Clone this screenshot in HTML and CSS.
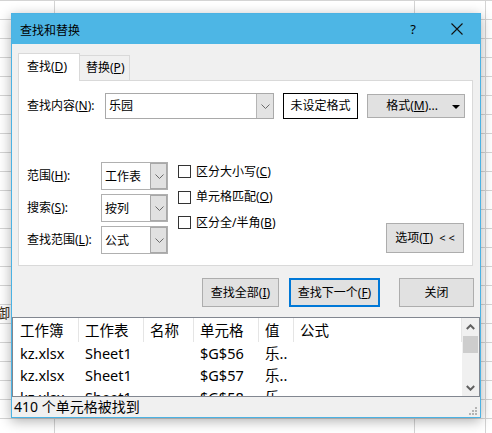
FILE: index.html
```html
<!DOCTYPE html>
<html lang="zh-CN">
<head>
<meta charset="utf-8">
<title>查找和替换</title>
<link rel="stylesheet" href="styles.css">
</head>
<body>
<div class="sheet">
  <span class="cell-text">御</span>
  <div class="dialog">
    <div class="titlebar">
      <span class="title">查找和替换</span>
      <span class="help">?</span>
      <span class="close"><svg width="12" height="12" viewBox="0 0 12 12"><path d="M0.5 0.5L11.5 11.5M11.5 0.5L0.5 11.5" stroke="#111" stroke-width="1.1" fill="none"/></svg></span>
    </div>
    <div class="dbody">
      <div class="tabs">
        <div class="tab active">查找(<u>D</u>)</div>
        <div class="tab">替换(<u>P</u>)</div>
      </div>
      <div class="panel">
        <div class="row1">
          <span class="lbl lbl-find">查找内容(<u>N</u>):</span>
          <div class="combo">
            <span class="combo-text">乐园</span>
            <span class="dd"><svg width="9" height="5" viewBox="0 0 9 5"><polyline points="0.5,0.5 4.5,4.5 8.5,0.5" stroke="#6a6a6a" stroke-width="1" fill="none"/></svg></span>
          </div>
          <div class="fmt-preview">未设定格式</div>
          <div class="btn fmt-btn"><span>格式(<u>M</u>)...</span><span class="tri"></span></div>
        </div>
        <div class="options">
          <div class="selects">
            <span class="lbl">范围(<u>H</u>):</span>
            <div class="select"><span class="sel-text">工作表</span><span class="dd"><svg width="9" height="5" viewBox="0 0 9 5"><polyline points="0.5,0.5 4.5,4.5 8.5,0.5" stroke="#6a6a6a" stroke-width="1" fill="none"/></svg></span></div>
            <span class="lbl">搜索(<u>S</u>):</span>
            <div class="select"><span class="sel-text">按列</span><span class="dd"><svg width="9" height="5" viewBox="0 0 9 5"><polyline points="0.5,0.5 4.5,4.5 8.5,0.5" stroke="#6a6a6a" stroke-width="1" fill="none"/></svg></span></div>
            <span class="lbl">查找范围(<u>L</u>):</span>
            <div class="select"><span class="sel-text">公式</span><span class="dd"><svg width="9" height="5" viewBox="0 0 9 5"><polyline points="0.5,0.5 4.5,4.5 8.5,0.5" stroke="#6a6a6a" stroke-width="1" fill="none"/></svg></span></div>
          </div>
          <div class="checks">
            <div class="check"><span class="box"></span><span>区分大小写(<u>C</u>)</span></div>
            <div class="check"><span class="box"></span><span>单元格匹配(<u>O</u>)</span></div>
            <div class="check"><span class="box"></span><span>区分全/半角(<u>B</u>)</span></div>
          </div>
          <div class="btn opt-btn">选项(<u>T</u>)<span class="chev">&lt;&lt;</span></div>
        </div>
      </div>
      <div class="actions">
        <div class="btn act act-all">查找全部(<u>I</u>)</div>
        <div class="btn act act-next">查找下一个(<u>F</u>)</div>
        <div class="btn act act-close">关闭</div>
      </div>
      <div class="results">
        <div class="table">
          <div class="trow thead">
            <span class="cell">工作簿</span>
            <span class="cell">工作表</span>
            <span class="cell">名称</span>
            <span class="cell">单元格</span>
            <span class="cell">值</span>
            <span class="cell">公式</span>
          </div>
          <div class="trow">
            <span class="cell">kz.xlsx</span>
            <span class="cell">Sheet1</span>
            <span class="cell"></span>
            <span class="cell">$G$56</span>
            <span class="cell">乐..</span>
            <span class="cell"></span>
          </div>
          <div class="trow">
            <span class="cell">kz.xlsx</span>
            <span class="cell">Sheet1</span>
            <span class="cell"></span>
            <span class="cell">$G$57</span>
            <span class="cell">乐..</span>
            <span class="cell"></span>
          </div>
          <div class="trow">
            <span class="cell">kz.xlsx</span>
            <span class="cell">Sheet1</span>
            <span class="cell"></span>
            <span class="cell">$G$58</span>
            <span class="cell">乐..</span>
            <span class="cell"></span>
          </div>
        </div>
        <div class="scrollbar">
          <span class="sb-btn"><svg width="9" height="6" viewBox="0 0 9 6"><polyline points="0.8,5 4.5,1.3 8.2,5" stroke="#606060" stroke-width="2" fill="none"/></svg></span>
          <span class="sb-thumb"></span>
          <span class="sb-track"></span>
          <span class="sb-btn"><svg width="9" height="6" viewBox="0 0 9 6"><polyline points="0.8,1 4.5,4.7 8.2,1" stroke="#606060" stroke-width="2" fill="none"/></svg></span>
        </div>
      </div>
      <div class="status">410 个单元格被找到</div>
    </div>
    <svg class="grip" width="9" height="9" viewBox="0 0 9 9">
      <rect x="6" y="0" width="2" height="2" fill="#b4b4b4"/>
      <rect x="3" y="3" width="2" height="2" fill="#b4b4b4"/>
      <rect x="6" y="3" width="2" height="2" fill="#b4b4b4"/>
      <rect x="0" y="6" width="2" height="2" fill="#b4b4b4"/>
      <rect x="3" y="6" width="2" height="2" fill="#b4b4b4"/>
      <rect x="6" y="6" width="2" height="2" fill="#b4b4b4"/>
    </svg>
  </div>
</div>
</body>
</html>
```

FILE: styles.css
```css
* { box-sizing: border-box; }

html, body {
  margin: 0;
  padding: 0;
  width: 492px;
  height: 433px;
  overflow: hidden;
  background: #ffffff;
}

body {
  font-family: "Noto Sans", "Noto Sans CJK SC", sans-serif;
  font-size: 12px;
  color: #000;
}

u { text-decoration: underline; text-underline-offset: 1px; }

.sheet {
  position: relative;
  width: 492px;
  height: 433px;
  background-color: #ffffff;
  background-image:
    linear-gradient(to right, transparent 54px, #d4d4d4 54px, #d4d4d4 55px, transparent 55px),
    linear-gradient(to right, transparent 414px, #d4d4d4 414px, #d4d4d4 415px, transparent 415px),
    linear-gradient(to right, transparent 485px, #d4d4d4 485px, #d4d4d4 486px, transparent 486px),
    repeating-linear-gradient(to bottom, #d4d4d4 0, #d4d4d4 1px, transparent 1px, transparent 19px);
}

.cell-text {
  position: absolute;
  left: -4px;
  top: 302px;
  font-family: "Noto Sans CJK SC", sans-serif;
  font-size: 14px;
  line-height: 20px;
  color: #3a3020;
}

.dialog {
  position: absolute;
  left: 11px;
  top: 13px;
  width: 470px;
  height: 405px;
  border: 1px solid #4bb2e3;
  background: #f0f0f0;
  box-shadow: 0 3px 12px rgba(0, 0, 0, 0.32);
  display: flex;
  flex-direction: column;
}

.titlebar {
  height: 30px;
  background: #4db6e5;
  display: flex;
  align-items: center;
  padding-left: 8px;
  flex: none;
}

.title {
  font-size: 12px;
  line-height: 16px;
  font-family: "Noto Sans CJK SC", sans-serif;
  padding-top: 1px;
}

.help {
  margin-left: auto;
  font-size: 13px;
  line-height: 16px;
  margin-right: 35px;
  font-family: "Noto Sans", sans-serif;
}

.close {
  display: flex;
  margin-right: 17px;
}

.dbody {
  flex: 1;
  display: flex;
  flex-direction: column;
  padding-top: 9px;
}

.tabs {
  height: 27px;
  display: flex;
  align-items: flex-end;
  padding-left: 6px;
  flex: none;
}

.tab {
  height: 25px;
  border: 1px solid #d9d9d9;
  border-bottom: none;
  background: #f0f0f0;
  display: flex;
  align-items: center;
  padding: 0 5px 0 6px;
  line-height: 16px;
  white-space: nowrap;
  margin-left: -1px;
}

.tab.active {
  height: 28px;
  width: 62px;
  background: #ffffff;
  margin-bottom: -1px;
  margin-left: 0;
  position: relative;
  z-index: 1;
  padding-left: 8px;
  padding-bottom: 2px;
}

.panel {
  height: 186px;
  margin: 0 7px 0 6px;
  border: 1px solid #d9d9d9;
  background: #ffffff;
  padding: 12px 8px 0 8px;
  flex: none;
}

.row1 {
  display: flex;
  align-items: center;
  height: 26px;
}

.lbl {
  line-height: 16px;
  white-space: nowrap;
}

.lbl-find {
  width: 78px;
  flex: none;
}

.combo {
  width: 169px;
  height: 26px;
  border: 1px solid #a9a9a9;
  display: flex;
  align-items: stretch;
  flex: none;
}

.combo-text {
  flex: 1;
  display: flex;
  align-items: center;
  padding-left: 3px;
  line-height: 16px;
}

.dd {
  width: 17px;
  background: #e3e3e3;
  border-left: 1px solid #b5b5b5;
  display: flex;
  align-items: center;
  justify-content: center;
  flex: none;
}

.fmt-preview {
  width: 75px;
  height: 26px;
  margin-left: 9px;
  border: 1px solid #000;
  background: #fff;
  display: flex;
  align-items: center;
  justify-content: center;
  line-height: 16px;
  flex: none;
}

.btn {
  background: #e1e1e1;
  border: 1px solid #adadad;
  display: flex;
  align-items: center;
  justify-content: center;
  line-height: 16px;
  white-space: nowrap;
}

.fmt-btn {
  width: 98px;
  height: 24px;
  margin-left: 9px;
  flex: none;
  position: relative;
  padding-right: 8px;
}

.tri {
  position: absolute;
  right: 4px;
  top: 10px;
  width: 0;
  height: 0;
  border-left: 4px solid transparent;
  border-right: 4px solid transparent;
  border-top: 4px solid #000;
}

.options {
  display: flex;
  margin-top: 43px;
}

.selects {
  display: grid;
  grid-template-columns: 74px 67px;
  grid-auto-rows: 28px;
  row-gap: 4px;
  align-items: center;
}

.select {
  height: 28px;
  border: 1px solid #b0b0b0;
  display: flex;
  align-items: stretch;
  background: #fff;
}

.select .dd {
  width: 17px;
  background: #e1e1e1;
  border-left: 1px solid #a8a8a8;
  box-shadow: inset -1px 0 0 #a8a8a8, inset 0 1px 0 #a8a8a8, inset 0 -1px 0 #a8a8a8;
}

.sel-text {
  flex: 1;
  display: flex;
  align-items: center;
  padding-left: 3px;
}

.checks {
  margin-left: 10px;
  margin-top: -3px;
  display: flex;
  flex-direction: column;
}

.check {
  height: 25.5px;
  display: flex;
  align-items: center;
  line-height: 16px;
  white-space: nowrap;
}

.box {
  width: 13px;
  height: 13px;
  border: 1px solid #333;
  background: #fff;
  margin-right: 5px;
  flex: none;
}

.opt-btn {
  margin-left: auto;
  margin-right: 0;
  align-self: flex-end;
  width: 78px;
  height: 30px;
  margin-bottom: 1px;
}

.chev {
  margin-left: 6px;
  letter-spacing: 3px;
  font-size: 11px;
  margin-right: -3px;
}

.actions {
  display: flex;
  justify-content: flex-end;
  margin-top: 12px;
  padding-right: 6px;
  height: 29px;
  flex: none;
}

.act {
  height: 29px;
}

.act-all { width: 77px; }
.act-next { width: 91px; margin-left: 10px; border: 2px solid #0078d7; }
.act-close { width: 75px; margin-left: 19px; }

.results {
  margin-top: 10px;
  height: 80px;
  border: 1px solid #828790;
  background: #fff;
  display: flex;
  flex: none;
}

.table {
  flex: 1;
  overflow: hidden;
}

.trow {
  display: grid;
  grid-template-columns: 66px 65px 50px 65px 35px 1fr;
  height: 22px;
  align-items: center;
  font-size: 14.5px;
  line-height: 20px;
}

.trow .cell {
  padding-left: 6px;
  white-space: nowrap;
  overflow: hidden;
}

.trow .cell:first-child { padding-left: 7px; }

.thead {
  height: 24px;
}

.thead .cell {
  height: 24px;
  display: flex;
  align-items: center;
  border-right: 1px solid #e5e5e5;
}

.scrollbar {
  width: 17px;
  background: #f0f0f0;
  display: flex;
  flex-direction: column;
  flex: none;
}

.sb-btn {
  height: 17px;
  display: flex;
  align-items: center;
  justify-content: center;
  flex: none;
}

.sb-thumb {
  height: 17px;
  margin: 1px 1px 0 1px;
  background: #cdcdcd;
  flex: none;
}

.sb-track { flex: 1; }

.status {
  height: 20px;
  display: flex;
  align-items: center;
  padding-left: 2px;
  font-size: 14px;
  line-height: 18px;
  flex: none;
}

.grip {
  position: absolute;
  right: 2px;
  bottom: 1px;
}
```
